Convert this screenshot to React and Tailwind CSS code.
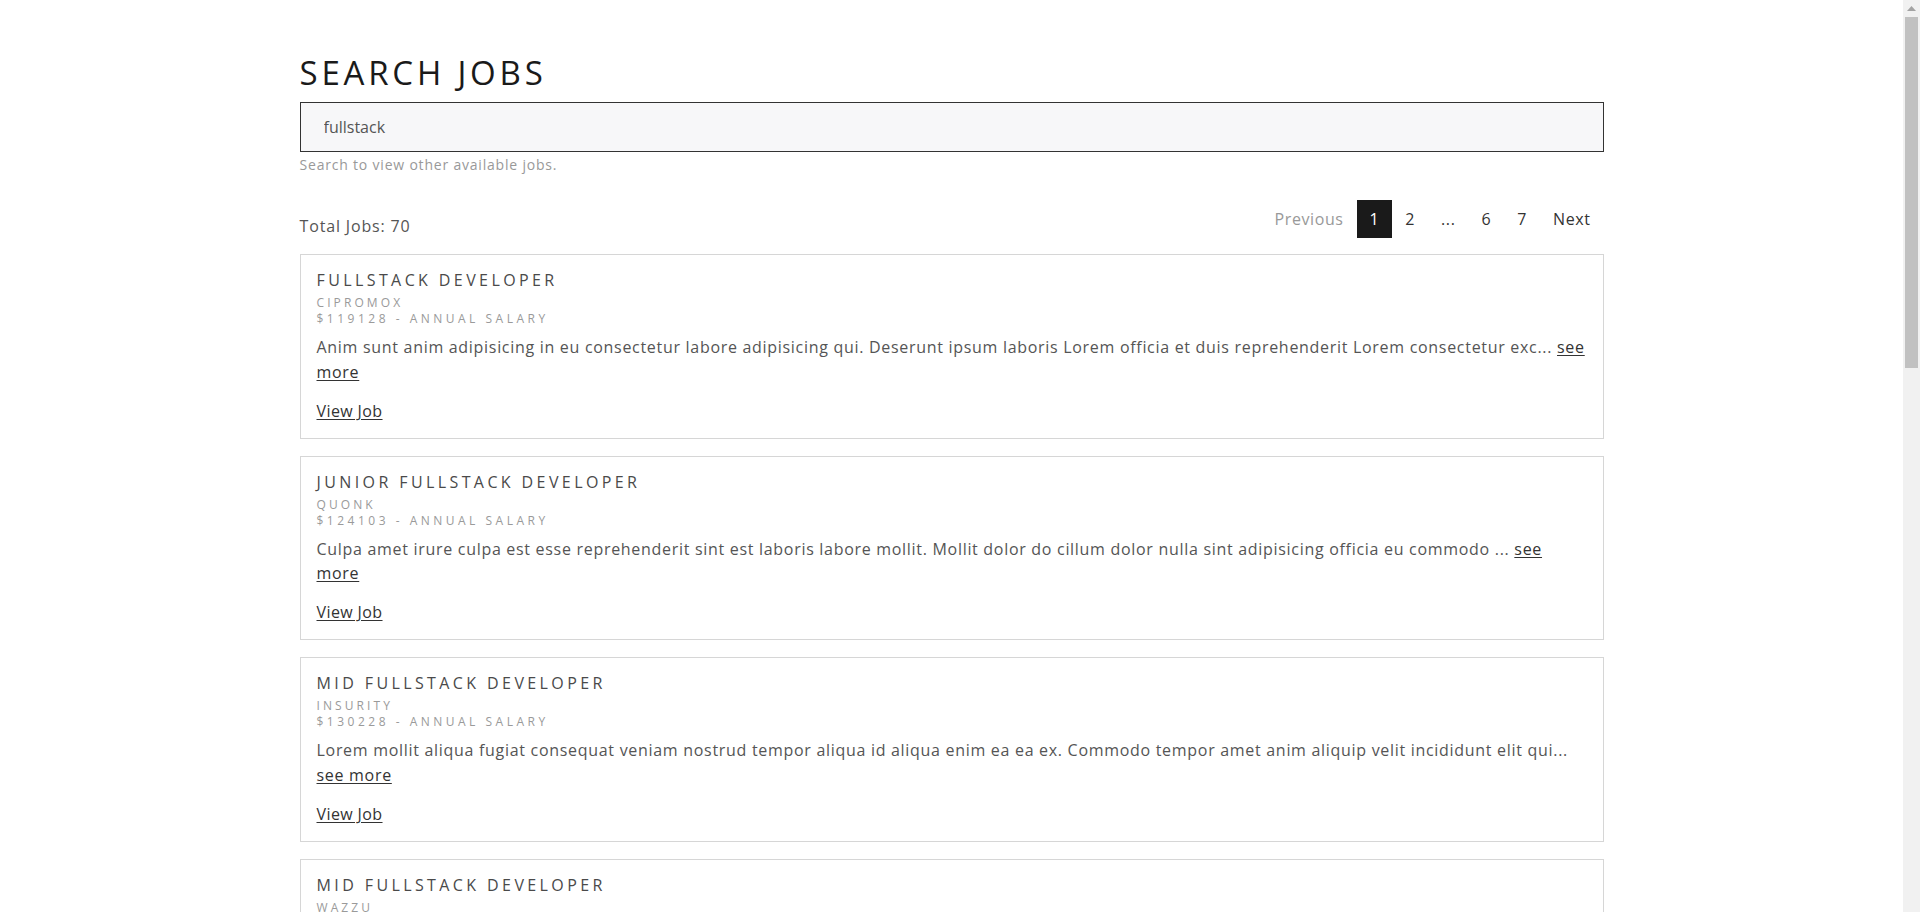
import React from "react";

const jobs = [
  {
    title: "Fullstack Developer",
    company: "Cipromox",
    salary: "$119128",
    description:
      "Anim sunt anim adipisicing in eu consectetur labore adipisicing qui. Deserunt ipsum laboris Lorem officia et duis reprehenderit Lorem consectetur exc...",
  },
  {
    title: "Junior Fullstack Developer",
    company: "Quonk",
    salary: "$124103",
    description:
      "Culpa amet irure culpa est esse reprehenderit sint est laboris labore mollit. Mollit dolor do cillum dolor nulla sint adipisicing officia eu commodo ...",
  },
  {
    title: "Mid Fullstack Developer",
    company: "Insurity",
    salary: "$130228",
    description:
      "Lorem mollit aliqua fugiat consequat veniam nostrud tempor aliqua id aliqua enim ea ea ex. Commodo tempor amet anim aliquip velit incididunt elit qui...",
  },
  {
    title: "Mid Fullstack Developer",
    company: "Wazzu",
    salary: "$98712",
    description:
      "Esse officia velit nisi ullamco ad cupidatat est labore voluptate minim aliqua. Proident mollit elit anim sunt consequat magna laborum tempor occaec...",
  },
  {
    title: "Senior Fullstack Developer",
    company: "Zentia",
    salary: "$142870",
    description:
      "Do aute ex ullamco dolor nostrud aliqua minim officia cupidatat nisi. Ipsum ullamco non irure laboris dolore excepteur culpa aliqua enim ut ipsum...",
  },
];

const pages = ["1", "2", "...", "6", "7"];

function JobCard({ job }) {
  return (
    <div className="border border-[#d6d6d6] bg-white px-4 pt-[13px] pb-[15px]">
      <h2 className="text-[16px] leading-[24px] uppercase tracking-[3.4px] text-[#4a4a4a]">
        {job.title}
      </h2>
      <div className="mt-[3px] text-[12px] leading-[16px] uppercase tracking-[3.1px] text-[#9a9a9a]">
        {job.company}
      </div>
      <div className="text-[12px] leading-[16px] uppercase tracking-[3.5px] text-[#9a9a9a]">
        {job.salary} - Annual Salary
      </div>
      <p className="mt-[8px] text-[16px] leading-[24.5px] tracking-[0.7px] text-[#555]">
        {job.description}{" "}
        <a href="#" className="text-[#333] underline underline-offset-2">
          see more
        </a>
      </p>
      <a
        href="#"
        className="mt-[14.5px] inline-block text-[16px] leading-[24px] tracking-[0.4px] text-[#333] underline underline-offset-2"
      >
        View Job
      </a>
    </div>
  );
}

function Scrollbar() {
  return (
    <div className="flex h-screen w-[17px] shrink-0 flex-col items-center bg-[#f1f1f1]">
      <div className="flex h-[17px] w-full items-center justify-center">
        <svg width="9" height="5" viewBox="0 0 9 5">
          <path d="M0 5 L4.5 0 L9 5 Z" fill="#a3a3a3" />
        </svg>
      </div>
      <div className="h-[351px] w-[13px] bg-[#c1c1c1]" />
    </div>
  );
}

export default function App() {
  return (
    <div
      className="flex h-screen overflow-hidden bg-white"
      style={{ fontFamily: '"Open Sans", "Noto Sans", sans-serif' }}
    >
      <div className="min-w-0 flex-1 overflow-hidden">
        <div className="mx-auto w-[1304px] pt-[53px] pb-16">
          <h1 className="mb-[9px] text-[33px] leading-[40px] uppercase tracking-[3.8px] text-[#1a1a1a]">
            Search Jobs
          </h1>
          <input
            type="text"
            defaultValue="fullstack"
            className="box-border block h-[50px] w-full border border-[#333] bg-[#f7f7f9] px-[23px] text-[16px] text-[#555] outline-none"
          />
          <div className="mt-[4px] text-[14px] leading-[18px] tracking-[0.8px] text-[#999]">
            Search to view other available jobs.
          </div>

          <div className="mt-[26px] flex items-end justify-between">
            <div className="text-[16px] leading-[24px] tracking-[0.85px] text-[#555]">
              Total Jobs: 70
            </div>
            <nav className="flex items-center text-[16px] tracking-[0.6px]">
              <span className="flex h-[38px] items-center px-[13px] text-[#999]">
                Previous
              </span>
              {pages.map((p) => (
                <span
                  key={p}
                  className={
                    p === "1"
                      ? "flex h-[38px] items-center bg-[#1a1a1a] px-[13px] text-white"
                      : "flex h-[38px] items-center px-[13px] text-[#333]"
                  }
                >
                  {p}
                </span>
              ))}
              <span className="flex h-[38px] items-center px-[13px] text-[#333]">
                Next
              </span>
            </nav>
          </div>

          <div className="mt-[16px] flex flex-col gap-[17px]">
            {jobs.map((job, i) => (
              <JobCard key={i} job={job} />
            ))}
          </div>
        </div>
      </div>
      <Scrollbar />
    </div>
  );
}
